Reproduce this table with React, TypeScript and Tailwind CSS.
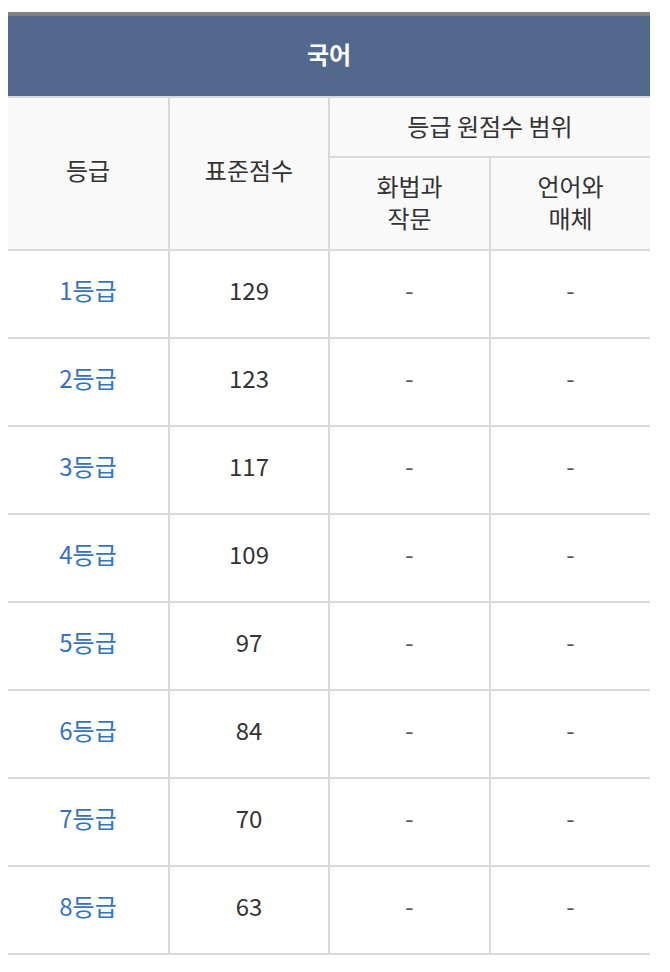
import React from 'react';

const rows = [
  { grade: '1등급', score: 129 },
  { grade: '2등급', score: 123 },
  { grade: '3등급', score: 117 },
  { grade: '4등급', score: 109 },
  { grade: '5등급', score: 97 },
  { grade: '6등급', score: 84 },
  { grade: '7등급', score: 70 },
  { grade: '8등급', score: 63 },
];

const cell = 'flex items-center justify-center text-center border-[#dadada]';

const App: React.FC = () => {
  return (
    <div
      className="min-h-screen bg-white px-[8px] pt-[12px] text-[24px] leading-[32px] text-[#333333]"
      style={{ fontFamily: '"Noto Sans CJK KR", "Noto Sans", sans-serif' }}
    >
      <div className="grid grid-cols-[160px_160px_161px_161px]">
        <div className="col-span-4 flex h-[86px] items-center justify-center border-t-4 border-b-2 border-t-[#808080] border-b-[#dadada] bg-[#53688d] pb-[4px] font-bold text-white">
          국어
        </div>

        <div className={`${cell} row-span-2 border-b-2 bg-[#f9f9f9] pb-[8px]`}>등급</div>
        <div className={`${cell} row-span-2 border-l-2 border-b-2 bg-[#f9f9f9] pb-[8px]`}>표준점수</div>
        <div className={`${cell} col-span-2 h-[60px] border-l-2 border-b-2 bg-[#f9f9f9] pb-[3px]`}>등급 원점수 범위</div>
        <div className={`${cell} h-[93px] border-l-2 border-b-2 bg-[#f9f9f9] pb-[4px]`}>
          화법과
          <br />
          작문
        </div>
        <div className={`${cell} h-[93px] border-l-2 border-b-2 bg-[#f9f9f9] pb-[4px]`}>
          언어와
          <br />
          매체
        </div>

        {rows.map((r) => (
          <React.Fragment key={r.grade}>
            <div className={`${cell} h-[88px] border-b-2 pb-[9px] text-[#3572c6]`}>{r.grade}</div>
            <div className={`${cell} h-[88px] border-l-2 border-b-2 pb-[9px]`}>{r.score}</div>
            <div className={`${cell} h-[88px] border-l-2 border-b-2 pb-[9px] text-[#555555]`}>-</div>
            <div className={`${cell} h-[88px] border-l-2 border-b-2 pb-[9px] text-[#555555]`}>-</div>
          </React.Fragment>
        ))}
      </div>
    </div>
  );
};

export default App;
